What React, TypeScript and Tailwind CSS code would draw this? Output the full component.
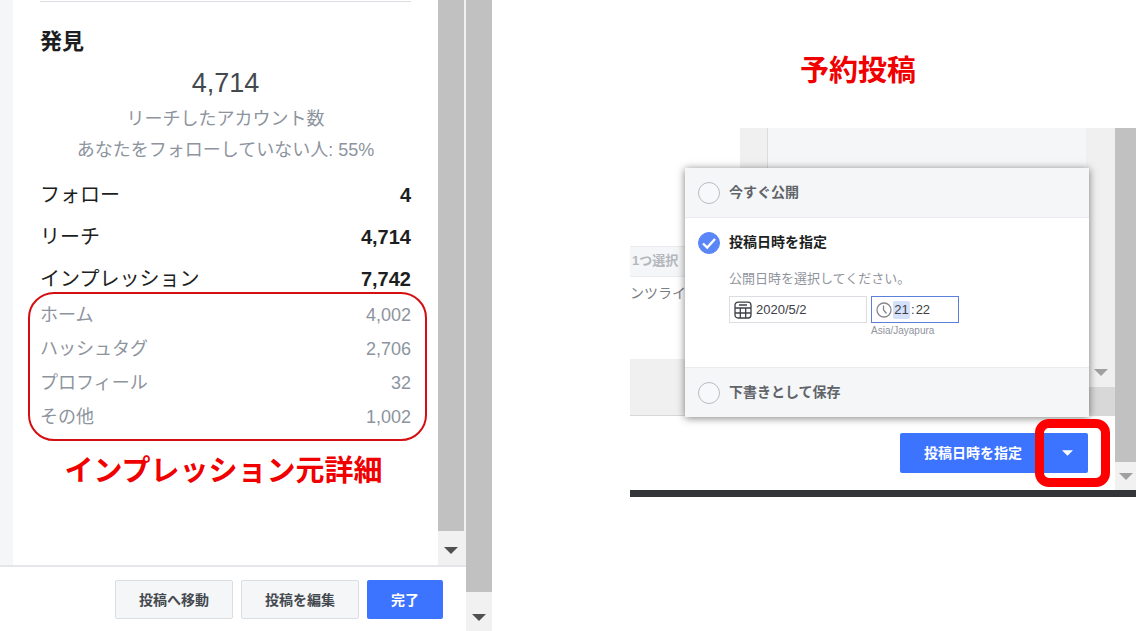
import { ReactNode } from "react";

const totals = [
  { label: "フォロー", value: "4" },
  { label: "リーチ", value: "4,714" },
  { label: "インプレッション", value: "7,742" },
];

const sources = [
  { label: "ホーム", value: "4,002" },
  { label: "ハッシュタグ", value: "2,706" },
  { label: "プロフィール", value: "32" },
  { label: "その他", value: "1,002" },
];

function DownArrow({ className }: { className: string }) {
  return (
    <svg viewBox="0 0 14 7" className={className} fill="currentColor" aria-hidden="true">
      <path d="M0 0h14L7 7z" />
    </svg>
  );
}

function CalendarIcon() {
  return (
    <svg viewBox="0 0 18 18" className="size-[18px] shrink-0 text-[#3c4045]" fill="none" stroke="currentColor" strokeWidth="1.3" aria-hidden="true">
      <rect x="1" y="1.2" width="16" height="15.8" rx="3" />
      <path d="M1 7h16M1 12h16M6.3 7v10M11.7 7v10M5 4h8" />
    </svg>
  );
}

function ClockIcon() {
  return (
    <svg viewBox="0 0 16 16" className="size-4 shrink-0 text-[#85888d]" fill="none" stroke="currentColor" strokeWidth="1.3" aria-hidden="true">
      <circle cx="8" cy="8" r="7" />
      <path d="M7.5 3.5V8l3 3.5" />
    </svg>
  );
}

function RadioOption({ id, checked, children }: { id: string; checked?: boolean; children: ReactNode }) {
  return (
    <div className="flex h-[49px] items-center gap-[9px] pl-[13px]">
      <span className="relative flex size-[22px]">
        <input
          type="radio"
          name="publish"
          id={id}
          defaultChecked={checked}
          className="peer size-[22px] appearance-none rounded-full border border-[#b9bcc1] bg-[#f7f8fa] checked:border-[#5b86f7] checked:bg-[#5b86f7]"
        />
        <svg viewBox="0 0 22 22" className="pointer-events-none absolute inset-0 hidden size-[22px] peer-checked:block" fill="none" stroke="white" strokeWidth="2.4" aria-hidden="true">
          <path d="M5 11.5l4.2 4L17 7" />
        </svg>
      </span>
      <label htmlFor={id} className={`pb-0.5 text-sm font-bold ${checked ? "text-[#1c1e21]" : "text-[#606469]"}`}>
        {children}
      </label>
    </div>
  );
}

function InsightsPanel() {
  return (
    <section className="flex min-h-screen">
      <div className="flex flex-1 flex-col">
        <div className="flex flex-1">
          <div className="w-[13px] bg-[#f4f6f8]" />
          <div className="flex-1 px-[27px] pt-px">
            <h2 className="border-t border-[#dadde1] pt-6 text-[22px] leading-8 font-bold text-[#1c1e21]">発見</h2>
            <div className="pt-1 text-center text-[#8d949e]">
              <p className="text-[27px] leading-[42px] text-[#444950]">4,714</p>
              <p className="text-lg leading-[31px]">リーチしたアカウント数</p>
              <p className="text-lg leading-[31px]">あなたをフォローしていない人: 55%</p>
            </div>
            <dl className="pt-2 text-xl leading-[42px] text-[#1c1e21]">
              {totals.map((row) => (
                <div key={row.label} className="flex justify-between">
                  <dt>{row.label}</dt>
                  <dd className="font-bold">{row.value}</dd>
                </div>
              ))}
            </dl>
            <dl className="-mx-3 -mt-2 -mr-4 rounded-[26px] border-2 border-[#d40f12] pt-1 pr-[14px] pb-[5px] pl-[10px] text-lg leading-[34px] text-[#8d949e]">
              {sources.map((row) => (
                <div key={row.label} className="flex justify-between">
                  <dt>{row.label}</dt>
                  <dd>{row.value}</dd>
                </div>
              ))}
            </dl>
            <p className="pt-[9px] pr-1 text-center text-[29px] leading-[42px] font-bold whitespace-nowrap text-[#f00000]">インプレッション元詳細</p>
          </div>
          <div className="flex w-7 flex-col bg-[#f1f1f1] pr-0.5">
            <div className="flex-1 bg-[#c1c1c1]" />
            <div className="flex h-[34px] items-center justify-center pt-1">
              <DownArrow className="h-[7px] w-[14px] text-[#505050]" />
            </div>
          </div>
        </div>
        <footer className="flex justify-end gap-2 border-t-2 border-[#e4e6e9] pt-[13px] pr-[23px] pb-3 text-sm font-bold">
          <button className="h-[39px] rounded-xs border border-[#dadde1] bg-[#f5f6f7] px-[23px] text-[#444950]">投稿へ移動</button>
          <button className="h-[39px] rounded-xs border border-[#dadde1] bg-[#f5f6f7] px-[23px] text-[#444950]">投稿を編集</button>
          <button className="h-[39px] rounded-xs bg-[#3c73ff] px-6 text-white">完了</button>
        </footer>
      </div>
      <div className="flex w-[26px] flex-col bg-[#f1f1f1]">
        <div className="flex-1 bg-[#c1c1c1]" />
        <div className="flex h-[39px] items-center justify-center pt-3">
          <DownArrow className="h-[7px] w-[14px] text-[#505050]" />
        </div>
      </div>
    </section>
  );
}

function PublishMenu() {
  return (
    <div className="absolute top-10 right-[26px] w-[404px] bg-white shadow-[0_1px_8px_rgba(0,0,0,0.5)]">
      <div className="border-b border-[#e9ebee] bg-[#f5f6f7]">
        <RadioOption id="now">今すぐ公開</RadioOption>
      </div>
      <div className="pb-7">
        <RadioOption id="scheduled" checked>
          投稿日時を指定
        </RadioOption>
        <div className="pl-11">
          <p className="text-[13px] leading-6 text-[#90949c]">公開日時を選択してください。</p>
          <div className="flex items-start gap-1 pt-[5px] text-[13px] text-[#3c4045]">
            <div className="flex h-[27px] w-[138px] items-center gap-1 border border-[#dadde1] pl-1">
              <CalendarIcon />
              <input aria-label="日付" defaultValue="2020/5/2" className="w-full min-w-0 outline-none" />
            </div>
            <div>
              <div className="flex h-[27px] w-[88px] items-center border border-[#5b7fdb] pl-1">
                <ClockIcon />
                <input aria-label="時" defaultValue="21" className="ml-px h-[18px] w-[17px] rounded-xs bg-[#d5e0fa] text-center outline-none" />
                <span className="px-px">:</span>
                <input aria-label="分" defaultValue="22" className="w-5 outline-none" />
              </div>
              <p className="text-[10px] leading-4 text-[#90949c]">Asia/Jayapura</p>
            </div>
          </div>
        </div>
      </div>
      <div className="border-t border-[#e9ebee] bg-[#f5f6f7]">
        <RadioOption id="draft">下書きとして保存</RadioOption>
      </div>
    </div>
  );
}

function SchedulePanel() {
  return (
    <section className="pl-[138px]">
      <h2 className="pt-[50px] pr-[50px] pb-9 text-center text-[29px] leading-[42px] font-bold text-[#f00000]">予約投稿</h2>
      <div className="flex overflow-hidden border-b-[7px] border-[#343539]">
        <div className="relative flex flex-1 flex-col">
          <div className="flex h-[288px]">
            <div className="flex w-[110px] flex-col text-sm whitespace-nowrap">
              <div className="mt-[118px] h-[31px] border-y border-[#e9ebee] bg-[#f5f6f7] pl-0.5 text-[13px] leading-7 font-bold text-[#b4b8be]">1つ選択</div>
              <p className="pt-1 leading-6 text-[#7b7f85]">ンツライ</p>
              <div className="mt-auto h-[57px] border-b border-[#d8d8d8] bg-[#f0f0f0]" />
            </div>
            <div className="w-7 border-r border-[#dcdcdc] bg-[#f0f0f0]" />
            <div className="flex-1 bg-[#f4f6f8]" />
            <div className="flex w-[29px] flex-col justify-end bg-[#f0f0f0]">
              <DownArrow className="mb-[11px] h-[7px] w-[14px] self-center text-[#a0a0a0]" />
              <div className="h-[29px] bg-[#d8d8d8]" />
            </div>
          </div>
          <footer className="flex h-[74px] items-center justify-end pr-[27px]">
            <button className="h-10 rounded-l-xs bg-[#3c73ff] px-6 text-sm font-bold text-white">投稿日時を指定</button>
            <button aria-label="投稿日時を指定" className="flex h-10 w-[42px] items-center justify-center rounded-r-xs bg-[#3c73ff] text-white">
              <DownArrow className="h-[6px] w-[11px]" />
            </button>
          </footer>
          <PublishMenu />
          <div className="pointer-events-none absolute right-[5px] bottom-[3px] h-[68px] w-[75px] rounded-[14px] border-[9px] border-[#ff0000]" />
        </div>
        <div className="flex w-[21px] flex-col bg-[#f1f1f1]">
          <div className="flex-1 bg-[#c1c1c1]" />
          <div className="flex h-7 items-center justify-center">
            <DownArrow className="h-[7px] w-[14px] text-[#a0a0a0]" />
          </div>
        </div>
      </div>
    </section>
  );
}

export default function App() {
  return (
    <main className="grid min-h-screen grid-cols-[492fr_644fr] bg-white font-['Liberation_Sans','Noto_Sans_CJK_JP',sans-serif]">
      <InsightsPanel />
      <SchedulePanel />
    </main>
  );
}
